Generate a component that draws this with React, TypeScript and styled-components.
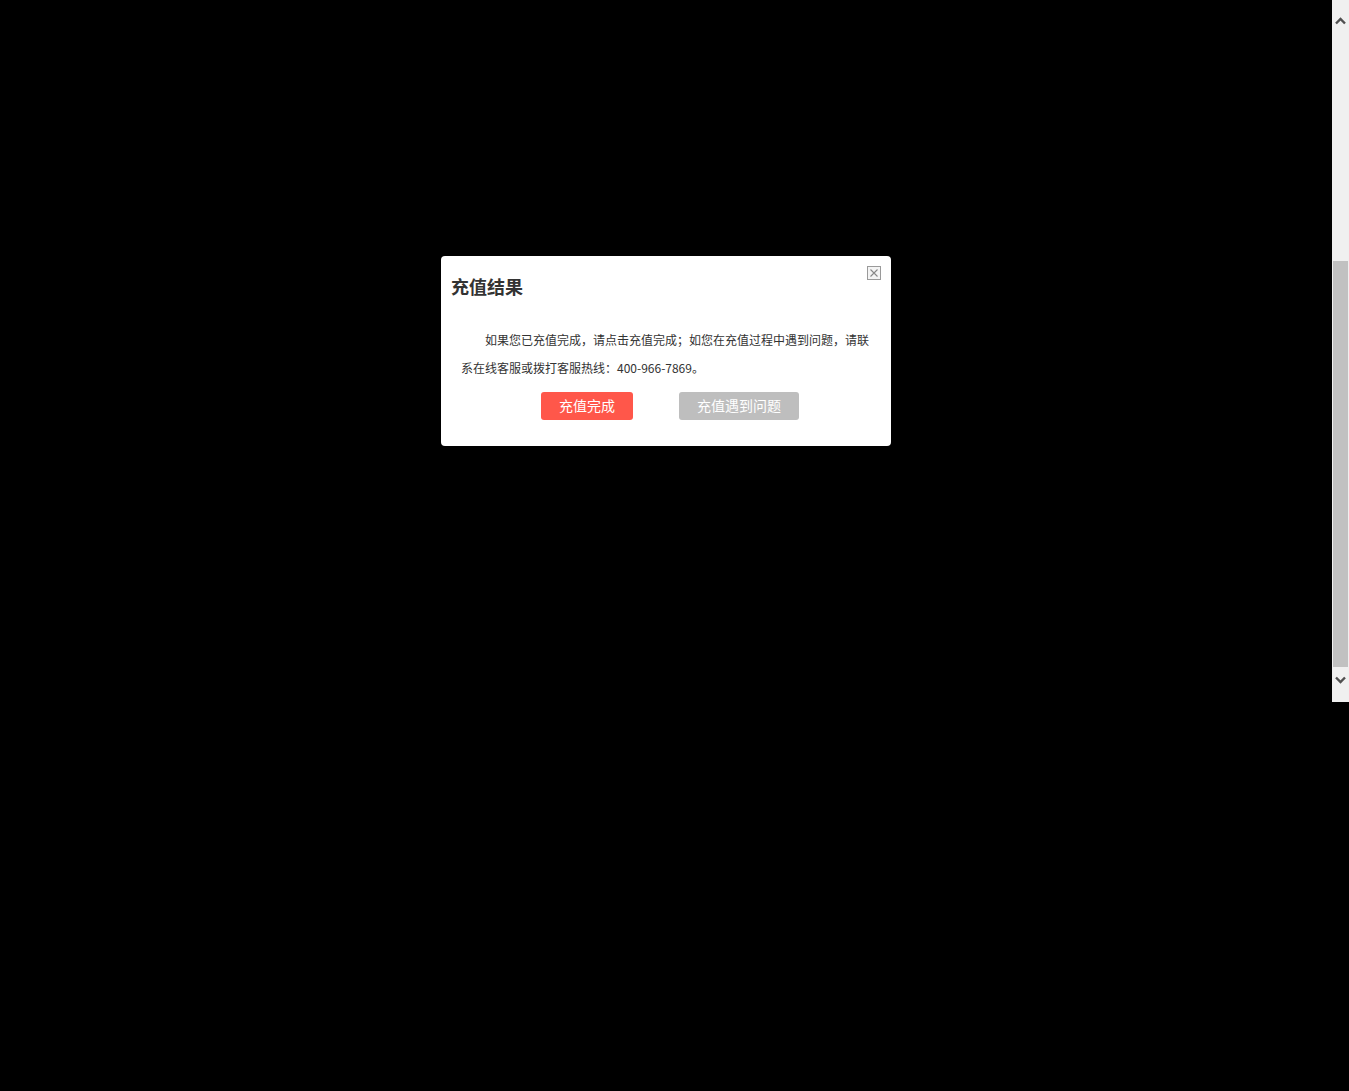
import React from "react";
import styled, { createGlobalStyle } from "styled-components";

const Global = createGlobalStyle`
  html, body { margin: 0; padding: 0; background: #000; }
  body { font-family: "Microsoft YaHei", "Noto Sans CJK SC", "Noto Sans", sans-serif; }
`;

const Frame = styled.div`
  display: flex;
  width: 1349px;
  height: 702px;
`;

const Stage = styled.div`
  flex: 1;
  display: flex;
  align-items: center;
  justify-content: center;
  background: #000;
`;

const ScrollBar = styled.div`
  width: 17px;
  background: #f0f0f0;
  display: flex;
  flex-direction: column;
  align-items: center;
`;

const ArrowBox = styled.div<{ $top?: boolean }>`
  width: 17px;
  height: 17px;
  display: flex;
  align-items: center;
  justify-content: center;
  margin: ${(p) => (p.$top ? "12px 0 0" : "0 0 14px")};
`;

const Track = styled.div`
  flex: 1;
  width: 100%;
  display: flex;
  flex-direction: column;
  align-items: center;
  padding-top: 232px;
  padding-bottom: 4px;
  box-sizing: border-box;
`;

const Thumb = styled.div`
  width: 15px;
  height: 406px;
  background: #c1c1c1;
`;

const Dialog = styled.div`
  position: relative;
  width: 450px;
  height: 190px;
  box-sizing: border-box;
  background: #fff;
  border-radius: 4px;
  padding: 18px 0 0;
`;

const Title = styled.h3`
  margin: 0;
  padding-left: 10px;
  font-size: 18px;
  line-height: 24px;
  font-weight: bold;
  color: #333;
`;

const Close = styled.button`
  position: absolute;
  top: 10px;
  right: 10px;
  width: 14px;
  height: 14px;
  padding: 0;
  border: 1px solid #9a9a9a;
  background: #f4f4f4;
  display: flex;
  align-items: center;
  justify-content: center;
  box-sizing: border-box;
`;

const Text = styled.p`
  margin: 28px 0 0;
  padding: 0 20px;
  font-size: 12px;
  line-height: 28px;
  text-indent: 24px;
  color: #333;
`;

const Actions = styled.div`
  display: flex;
  justify-content: center;
  gap: 46px;
  margin-top: 10px;
  padding-left: 8px;
`;

const Btn = styled.button<{ $primary?: boolean }>`
  height: 28px;
  padding: 0 0 2px;
  width: ${(p) => (p.$primary ? "92px" : "120px")};
  border: none;
  border-radius: 3px;
  background: ${(p) => (p.$primary ? "#ff574a" : "#bebebe")};
  color: #fff;
  font-family: inherit;
  font-size: 14px;
  line-height: 26px;
`;

export default function App() {
  return (
    <>
      <Global />
      <Frame>
        <Stage>
          <Dialog>
            <Close aria-label="close">
              <svg width="10" height="10" viewBox="0 0 10 10">
                <path d="M1.5 1.5 L8.5 8.5 M8.5 1.5 L1.5 8.5" stroke="#888" strokeWidth="1.1" fill="none" />
              </svg>
            </Close>
            <Title>充值结果</Title>
            <Text>
              如果您已充值完成，请点击充值完成；如您在充值过程中遇到问题，请联系在线客服或拨打客服热线：400-966-7869。
            </Text>
            <Actions>
              <Btn $primary>充值完成</Btn>
              <Btn>充值遇到问题</Btn>
            </Actions>
          </Dialog>
        </Stage>
        <ScrollBar>
          <ArrowBox $top>
            <svg width="11" height="8" viewBox="0 0 11 8">
              <path d="M1 6.5 L5.5 2 L10 6.5" stroke="#505050" strokeWidth="2.4" fill="none" />
            </svg>
          </ArrowBox>
          <Track>
            <Thumb />
          </Track>
          <ArrowBox>
            <svg width="11" height="8" viewBox="0 0 11 8">
              <path d="M1 1.5 L5.5 6 L10 1.5" stroke="#505050" strokeWidth="2.4" fill="none" />
            </svg>
          </ArrowBox>
        </ScrollBar>
      </Frame>
    </>
  );
}
